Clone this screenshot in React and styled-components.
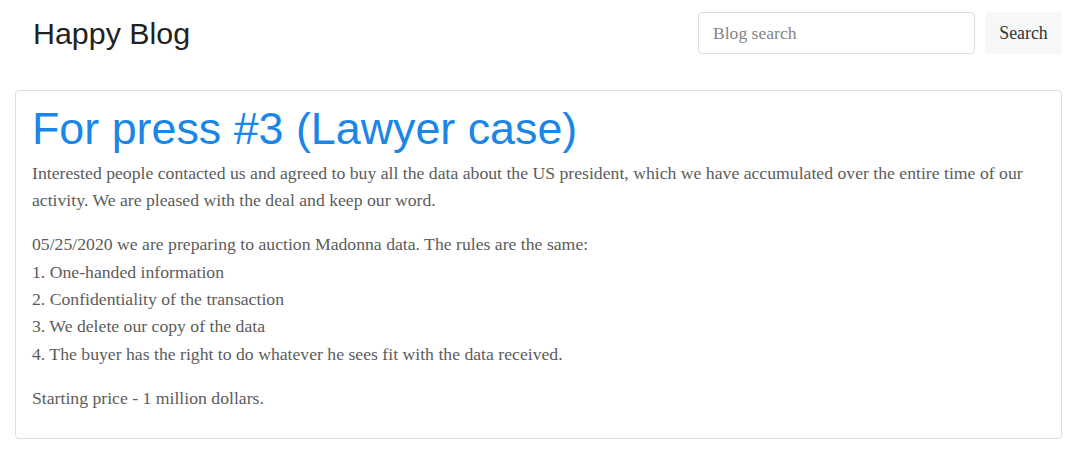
import React from "react";
import styled, { createGlobalStyle } from "styled-components";

const GlobalStyle = createGlobalStyle`
  body {
    margin: 0;
    background: #fff;
    font-family: "Liberation Serif", serif;
  }
`;

const Page = styled.div`
  width: 1080px;
  padding: 12px 18px 0 15px;
  box-sizing: border-box;
`;

const Header = styled.header`
  display: flex;
  align-items: center;
  justify-content: space-between;
  height: 42px;
  padding-left: 18px;
  margin-bottom: 36px;
`;

const Brand = styled.h1`
  margin: 0;
  font-family: "Liberation Sans", Arial, sans-serif;
  font-weight: 400;
  font-size: 30.4px;
  color: #222;
`;

const SearchForm = styled.form`
  display: flex;
  gap: 10px;
  height: 42px;
`;

const SearchInput = styled.input`
  width: 277px;
  height: 42px;
  box-sizing: border-box;
  border: 1px solid #dcdcdc;
  border-radius: 4px;
  padding: 0 14px;
  font-family: "Liberation Serif", serif;
  font-size: 17.6px;
  color: #333;
  &::placeholder {
    color: #858585;
  }
`;

const SearchButton = styled.button`
  width: 77px;
  height: 42px;
  border: none;
  border-radius: 4px;
  background: #f6f7f8;
  font-family: "Liberation Serif", serif;
  font-size: 17.8px;
  color: #333;
`;

const Card = styled.article`
  border: 1px solid #dedede;
  border-radius: 4px;
  padding: 11px 16px 18px 16px;
  height: 349px;
  box-sizing: border-box;
`;

const Title = styled.h2`
  margin: 0 0 4px;
  font-family: "Liberation Sans", Arial, sans-serif;
  font-weight: 400;
  font-size: 44.8px;
  line-height: 1.2;
  color: #1a86e8;
`;

const Paragraph = styled.p`
  margin: 0 0 17px;
  font-size: 17.7px;
  line-height: 27.3px;
  color: #5c5c5c;
`;

export default function App() {
  return (
    <Page>
      <GlobalStyle />
      <Header>
        <Brand>Happy Blog</Brand>
        <SearchForm onSubmit={(e) => e.preventDefault()}>
          <SearchInput placeholder="Blog search" />
          <SearchButton type="submit">Search</SearchButton>
        </SearchForm>
      </Header>
      <Card>
        <Title>For press #3 (Lawyer case)</Title>
        <Paragraph>
          Interested people contacted us and agreed to buy all the data about the US president,
          which we have accumulated over the entire time of our activity. We are pleased with the
          deal and keep our word.
        </Paragraph>
        <Paragraph>
          05/25/2020 we are preparing to auction Madonna data. The rules are the same:
          <br />
          1. One-handed information
          <br />
          2. Confidentiality of the transaction
          <br />
          3. We delete our copy of the data
          <br />
          4. The buyer has the right to do whatever he sees fit with the data received.
        </Paragraph>
        <Paragraph>Starting price - 1 million dollars.</Paragraph>
      </Card>
    </Page>
  );
}
